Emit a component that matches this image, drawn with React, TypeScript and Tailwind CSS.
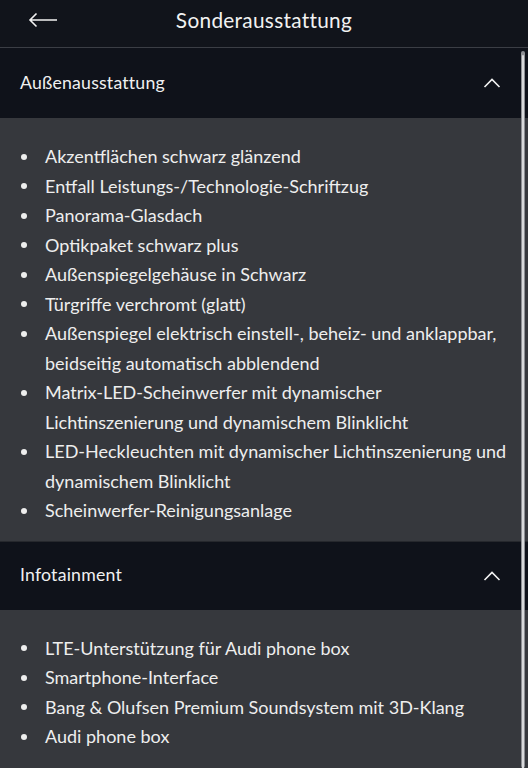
import React from 'react';

const exterior: string[] = [
  'Akzentflächen schwarz glänzend',
  'Entfall Leistungs-/Technologie-Schriftzug',
  'Panorama-Glasdach',
  'Optikpaket schwarz plus',
  'Außenspiegelgehäuse in Schwarz',
  'Türgriffe verchromt (glatt)',
  'Außenspiegel elektrisch einstell-, beheiz- und anklappbar, beidseitig automatisch abblendend',
  'Matrix-LED-Scheinwerfer mit dynamischer Lichtinszenierung und dynamischem Blinklicht',
  'LED-Heckleuchten mit dynamischer Lichtinszenierung und dynamischem Blinklicht',
  'Scheinwerfer-Reinigungsanlage',
];

const infotainment: string[] = [
  'LTE-Unterstützung für Audi phone box',
  'Smartphone-Interface',
  'Bang & Olufsen Premium Soundsystem mit 3D-Klang',
  'Audi phone box',
];

function Chevron() {
  return (
    <svg width="18" height="10" viewBox="0 0 18 10" fill="none" aria-hidden="true">
      <path d="M1.5 9L9 1.5L16.5 9" stroke="#f2f2f2" strokeWidth="1.6" />
    </svg>
  );
}

function Section({ title, items, first }: { title: string; items: string[]; first?: boolean }) {
  return (
    <section>
      <div
        className={`flex items-center justify-between pl-5 pr-[27px] bg-[#0f121a] ${
          first ? 'h-[70px]' : 'h-[69px] border-t border-[#26282d]'
        }`}
      >
        <span className="text-[17.7px] text-[#f0f0f0] tracking-[0.2px]">{title}</span>
        <Chevron />
      </div>
      <ul className={`bg-[#36383d] pl-[20px] pr-5 pt-6 ${first ? 'pb-[15px]' : 'pb-6'}`}>
        {items.map((item) => (
          <li key={item} className="flex text-[18px] leading-[29.5px] text-[#eeeeee]">
            <span className="w-[25px] shrink-0 flex items-center h-[29.5px]">
              <span className="block w-[6px] h-[6px] rounded-full bg-[#eeeeee] ml-[1px]" />
            </span>
            <span>{item}</span>
          </li>
        ))}
      </ul>
    </section>
  );
}

export default function App(): JSX.Element {
  return (
    <div
      className="relative w-[528px] h-[768px] overflow-hidden bg-[#11141b]"
      style={{ fontFamily: 'Lato, "Noto Sans", sans-serif' }}
    >
      <header className="relative h-[48px] flex items-center justify-center border-b border-[#3b3e45]">
        <svg
          className="absolute left-[28px] top-[12px]"
          width="30"
          height="16"
          viewBox="0 0 30 16"
          fill="none"
          aria-hidden="true"
        >
          <path d="M8.5 1.5L2 8L8.5 14.5M2 8H29" stroke="#f2f2f2" strokeWidth="1.6" />
        </svg>
        <h1 className="text-[20.8px] text-[#f2f2f2] tracking-[0.3px] -mt-[8px]">Sonderausstattung</h1>
      </header>

      <Section title="Außenausstattung" items={exterior} first />
      <Section title="Infotainment" items={infotainment} />

      {/* scrollbar overlay */}
      <div className="absolute right-[3px] top-[51px] bottom-0 w-[4px] rounded-full bg-[#8d8f94] flex justify-center">
        <div className="w-[2px] mt-[4px] h-full bg-[#d8d9db] rounded-full" />
      </div>
    </div>
  );
}
